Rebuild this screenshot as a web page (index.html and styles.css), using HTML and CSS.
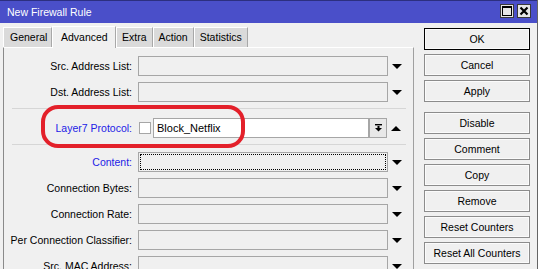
FILE: index.html
```html
<!DOCTYPE html>
<html lang="en">
  <head>
    <meta charset="UTF-8" />
    <title>New Firewall Rule</title>
    <link rel="stylesheet" href="styles.css">
  </head>
  <body>
    <div class="window">
      <div class="titlebar">
        <span class="title">New Firewall Rule</span>
        <div class="tb-btns">
          <span class="tb-btn"><span class="max-icon"></span></span>
          <span class="tb-btn">
            <svg width="10" height="10" viewBox="0 0 10 10"><path d="M1.5 1.5 L8.5 8.5 M8.5 1.5 L1.5 8.5" stroke="#000" stroke-width="2.2"/></svg>
          </span>
        </div>
      </div>
      <div class="body">
        <div class="main">
          <div class="tabs">
            <span class="tab">General</span>
            <span class="tab active">Advanced</span>
            <span class="tab">Extra</span>
            <span class="tab">Action</span>
            <span class="tab">Statistics</span>
          </div>
          <div class="panel">
            <div class="row">
              <label class="lbl">Src. Address List:</label>
              <span class="field"></span>
              <span class="arrow-cell"><span class="down"></span></span>
            </div>
            <div class="row">
              <label class="lbl">Dst. Address List:</label>
              <span class="field"></span>
              <span class="arrow-cell"><span class="down"></span></span>
            </div>
            <div class="sep sep-a"></div>
            <div class="row">
              <label class="lbl blue">Layer7 Protocol:</label>
              <span class="check"></span>
              <span class="field white narrow">Block_Netflix</span>
              <span class="drop-btn">
                <svg width="9" height="10" viewBox="0 0 9 10"><rect x="1" y="1" width="7" height="1.4" fill="#000"/><rect x="3.5" y="3" width="2" height="2" fill="#000"/><path d="M1 5 L8 5 L4.5 8.5 Z" fill="#000"/></svg>
              </span>
              <span class="arrow-cell"><span class="up"></span></span>
            </div>
            <div class="sep sep-b"></div>
            <div class="row">
              <label class="lbl blue">Content:</label>
              <span class="field focus"><span class="focus-ring"></span></span>
              <span class="arrow-cell"><span class="down"></span></span>
            </div>
            <div class="row">
              <label class="lbl">Connection Bytes:</label>
              <span class="field"></span>
              <span class="arrow-cell"><span class="down"></span></span>
            </div>
            <div class="row">
              <label class="lbl">Connection Rate:</label>
              <span class="field"></span>
              <span class="arrow-cell"><span class="down"></span></span>
            </div>
            <div class="row">
              <label class="lbl">Per Connection Classifier:</label>
              <span class="field"></span>
              <span class="arrow-cell"><span class="down"></span></span>
            </div>
            <div class="row">
              <label class="lbl">Src. MAC Address:</label>
              <span class="field"></span>
              <span class="arrow-cell"><span class="down"></span></span>
            </div>
          </div>
        </div>
        <div class="side">
          <span class="btn default">OK</span>
          <span class="btn">Cancel</span>
          <span class="btn">Apply</span>
          <span class="btn gap">Disable</span>
          <span class="btn">Comment</span>
          <span class="btn">Copy</span>
          <span class="btn">Remove</span>
          <span class="btn">Reset Counters</span>
          <span class="btn">Reset All Counters</span>
        </div>
      </div>
      <div class="highlight"></div>
    </div>
  </body>
</html>
```

FILE: styles.css
```css
* {
  margin: 0;
  padding: 0;
  box-sizing: border-box;
}
body {
  width: 538px;
  height: 269px;
  overflow: hidden;
  background: #f0f0f0;
  font-family: "Liberation Sans", Arial, sans-serif;
  font-size: 10.5px;
  color: #000;
}
.window {
  position: relative;
  width: 538px;
  height: 269px;
  overflow: hidden;
  border-right: 1px solid #646464;
}
.titlebar {
  height: 23px;
  background: #4a4fc9;
  border-top: 1px solid #2c2f80;
  display: flex;
  align-items: center;
  justify-content: space-between;
  padding: 0 6px 0 7px;
}
.title {
  color: #fff;
  font-size: 10.5px;
}
.tb-btns {
  display: flex;
  gap: 3px;
  margin-top: -3px;
}
.tb-btn {
  width: 14px;
  height: 14px;
  background: #e6e6e6;
  border: 1px solid #3a3a3a;
  display: flex;
  align-items: center;
  justify-content: center;
}
.max-icon {
  width: 10px;
  height: 10px;
  border: 1px solid #000;
  border-top-width: 2px;
}
.body {
  display: flex;
  padding: 2px 0 0 3px;
}
.main {
  width: 411px;
}
.tabs {
  display: flex;
  height: 22px;
  align-items: flex-end;
}
.tab {
  height: 20px;
  line-height: 19px;
  padding: 0 5px;
  background: #dadada;
  border-top: 1px solid #fff;
  border-left: 1px solid #fff;
  border-right: 1px solid #a8a8a8;
}
.tab:first-child {
  width: 49px;
  padding: 0 6px;
}
.tab.active {
  height: 22px;
  line-height: 20px;
  width: 64px;
  padding: 0 0 0 8px;
  background: #f0f0f0;
  position: relative;
  top: 1px;
}
.panel {
  height: 230px;
  border-top: 1px solid #fff;
  border-left: 1px solid #8a8a8a;
  border-right: 1px solid #a0a0a0;
  padding-top: 8px;
}
.row {
  display: flex;
  align-items: center;
  height: 20px;
  margin-bottom: 6px;
}
.lbl {
  width: 130px;
  padding-right: 2px;
  text-align: right;
  margin-right: 4px;
}
.blue {
  color: #2222e6;
}
.field {
  width: 250px;
  height: 20px;
  border: 1px solid #a6a6a6;
  background: #f0f0f0;
  padding: 0 0 0 3px;
  line-height: 18px;
  font-size: 11px;
}
.field.white {
  background: #fff;
}
.field.narrow {
  width: 216px;
}
.field.focus {
  padding: 1px;
}
.focus-ring {
  display: block;
  height: 16px;
  border: 1px dotted #000;
}
.check {
  width: 12px;
  height: 12px;
  border: 1px solid #a6a6a6;
  background: #fff;
  margin: 0 2px 0 1px;
}
.drop-btn {
  width: 18px;
  height: 20px;
  border: 1px solid #a6a6a6;
  background: #e8e8e8;
  display: flex;
  align-items: center;
  justify-content: center;
}
.arrow-cell {
  display: flex;
  align-items: center;
  padding-left: 4px;
}
.down {
  width: 0;
  height: 0;
  border-left: 5px solid transparent;
  border-right: 5px solid transparent;
  border-top: 5px solid #000;
}
.up {
  width: 0;
  height: 0;
  border-left: 5px solid transparent;
  border-right: 5px solid transparent;
  border-bottom: 5px solid #000;
}
.sep {
  height: 1px;
  background: #d6d6d6;
  margin: 0 7px 0 8px;
}
.sep-a {
  margin-top: 1px;
  margin-bottom: 9px;
}
.sep-b {
  margin-top: 2px;
  margin-bottom: 7px;
}
.side {
  display: flex;
  flex-direction: column;
  gap: 4px;
  margin-left: 10px;
  padding-top: 3px;
  width: 106px;
}
.btn {
  height: 22px;
  line-height: 20px;
  text-align: center;
  border: 1px solid #8c8c8c;
  background: #f0f0f0;
  box-shadow: inset 0 0 0 1px #fbfbfb;
}
.btn.default {
  border-color: #000;
}
.btn.gap {
  margin-top: 6px;
}
.highlight {
  position: absolute;
  left: 41px;
  top: 105px;
  width: 204px;
  height: 43px;
  border: 4px solid #e3202a;
  border-radius: 17px;
}
```
